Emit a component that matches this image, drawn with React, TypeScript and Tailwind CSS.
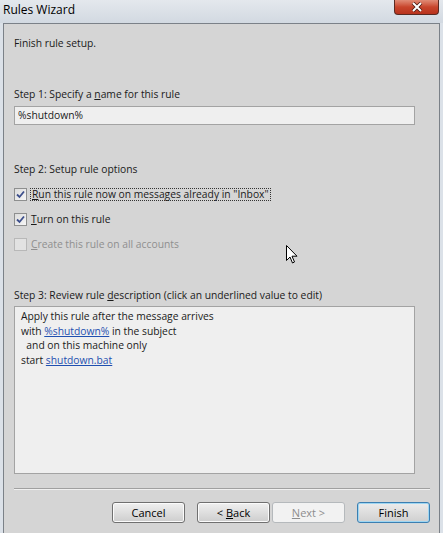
import React from "react";

function Check({ checked, disabled }: { checked?: boolean; disabled?: boolean }) {
  return (
    <div
      className={
        "w-[13px] h-[13px] border flex items-center justify-center shrink-0 " +
        (disabled
          ? "border-[#b8b8b8] bg-[#e2e2e2]"
          : "border-[#8e8f8f] bg-gradient-to-br from-[#dcdcdc] to-[#f6f6f6]")
      }
    >
      {checked && (
        <svg width="9" height="9" viewBox="0 0 9 9">
          <path d="M1 4.5 L3.5 7 L8 1.5" fill="none" stroke="#3d4f8c" strokeWidth="1.8" />
        </svg>
      )}
    </div>
  );
}

function Btn({
  children,
  disabled,
  primary,
}: {
  children: React.ReactNode;
  disabled?: boolean;
  primary?: boolean;
}) {
  let cls =
    "w-[73px] h-[21px] rounded-[3px] border flex items-center justify-center text-[11px] ";
  if (disabled) cls += "border-[#b5b9bc] bg-[#f2f2f2] text-[#8d8d8d]";
  else if (primary)
    cls +=
      "border-[#3c7fb1] bg-gradient-to-b from-[#ececec] to-[#cfcfcf] text-black shadow-[inset_0_0_0_1px_#9ed6f2]";
  else
    cls +=
      "border-[#707070] bg-gradient-to-b from-[#f0f0f0] to-[#cdcdcd] text-black shadow-[inset_0_0_0_1px_#fbfbfb]";
  return <div className={cls}>{children}</div>;
}

export default function App() {
  return (
    <div
      className="relative w-[443px] h-[533px] bg-[#dbe1e8] flex flex-col px-[3px] overflow-hidden text-[#1a1a1a]"
      style={{ fontFamily: '"Open Sans", "Noto Sans", sans-serif' }}
    >
      {/* title bar */}
      <div className="h-[23px] flex items-start justify-between shrink-0 -mx-[3px] bg-gradient-to-b from-[#e4e8ed] to-[#d2d9e1]">
        <div className="pl-[3px] pt-[2px] text-[12px] leading-[16px] text-black">Rules Wizard</div>
        <div className="mr-[4px] w-[45px] h-[15px] rounded-b-[4px] border border-t-0 border-[#5a2a22] bg-gradient-to-b from-[#e08b76] via-[#c8452c] to-[#b8331d] flex items-center justify-center">
          <svg width="12" height="10" viewBox="0 0 12 10">
            <path d="M2 1 L10 9 M10 1 L2 9" stroke="#4a1a12" strokeWidth="3.6" />
            <path d="M2 1 L10 9 M10 1 L2 9" stroke="#ffffff" strokeWidth="2" />
          </svg>
        </div>
      </div>

      {/* client area */}
      <div className="flex-1 border border-b-0 border-[#7b8188] bg-[#d5d5d5] pl-[10px] pr-[9px] text-[10.3px] leading-[15px]">
        <div className="mt-[12px]">Finish rule setup.</div>

        <div className="mt-[36px]">
          Step 1: Specify a <span className="underline">n</span>ame for this rule
        </div>
        <div className="mt-[4px] w-[401px] h-[19px] border border-[#a3a3a3] bg-[#efefef] px-[3px] flex items-center">
          %shutdown%
        </div>

        <div className="mt-[37px]">Step 2: Setup rule options</div>
        <div className="mt-[11px] flex items-center h-[13px]">
          <Check checked />
          <span className="ml-[3px] px-[1px] border border-dotted border-[#333] leading-[11px]">
            <span className="underline">R</span>un this rule now on messages already in "Inbox"
          </span>
        </div>
        <div className="mt-[12px] flex items-center h-[13px]">
          <Check checked />
          <span className="ml-[4px]">
            <span className="underline">T</span>urn on this rule
          </span>
        </div>
        <div className="mt-[12px] flex items-center h-[13px] text-[#8f8f8f]">
          <Check disabled />
          <span className="ml-[4px]">
            <span className="underline">C</span>reate this rule on all accounts
          </span>
        </div>

        <div className="mt-[37px]">
          Step 3: Review rule <span className="underline">d</span>escription (click an underlined value to edit)
        </div>
        <div className="mt-[3px] w-[401px] h-[168px] border border-[#a3a3a3] bg-[#efefef] px-[6px] pt-[2px] leading-[14.7px]">
          <div>Apply this rule after the message arrives</div>
          <div>
            with <span className="text-[#1f4fb0] underline">%shutdown%</span> in the subject
          </div>
          <div>&nbsp; and on this machine only</div>
          <div>
            start <span className="text-[#1f4fb0] underline">shutdown.bat</span>
          </div>
        </div>

        <div className="mt-[14px] w-[416px] h-[2px] border-t border-b border-t-[#a0a0a0] border-b-[#f0f0f0]" />

        <div className="mt-[12px] w-[416px] flex justify-end gap-[12px]">
          <Btn>Cancel</Btn>
          <div className="flex gap-[2px]">
            <Btn>
              &lt;&nbsp;<span className="underline">B</span>ack
            </Btn>
            <Btn disabled>
              <span className="underline">N</span>ext&nbsp;&gt;
            </Btn>
          </div>
          <Btn primary>Finish</Btn>
        </div>
      </div>

      {/* mouse pointer */}
      <svg
        className="absolute left-[286px] top-[245px]"
        width="13"
        height="20"
        viewBox="0 0 13 20"
      >
        <path
          d="M0.5 0.5 L0.5 15.5 L4 12 L6.5 18 L8.5 17 L6 11.2 L11 11.2 Z"
          fill="#ffffff"
          stroke="#000000"
          strokeWidth="1"
          strokeLinejoin="round"
        />
      </svg>
    </div>
  );
}
